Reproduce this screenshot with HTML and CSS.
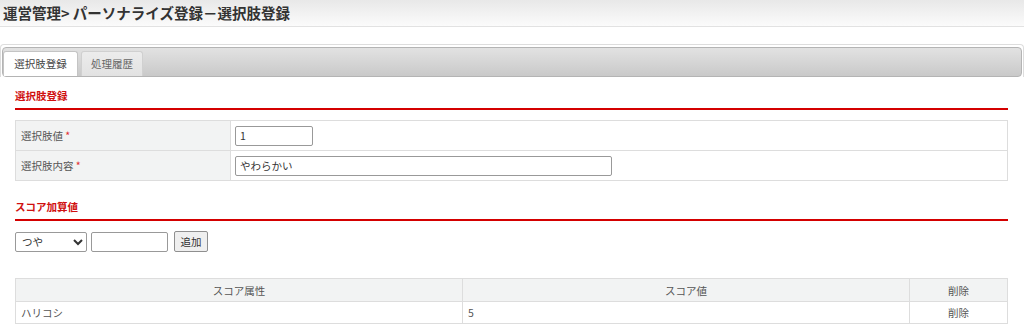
FILE: index.html
```html
<!DOCTYPE html>
<html lang="ja">
  <head>
    <meta charset="UTF-8" />
    <title>選択肢登録</title>
    <link rel="stylesheet" href="styles.css">
  </head>
  <body>
    <div class="page-title">運営管理&gt; パーソナライズ登録－選択肢登録</div>
    <div class="tabs">
      <div class="tab-nav">
        <span class="tab active">選択肢登録</span>
        <span class="tab">処理履歴</span>
      </div>
    </div>
    <div class="panel">
      <h2 class="section-title">選択肢登録</h2>
      <table class="form-table">
        <tr>
          <th>選択肢値 <span class="req">*</span></th>
          <td><input type="text" class="input-short" value="1" /></td>
        </tr>
        <tr>
          <th>選択肢内容 <span class="req">*</span></th>
          <td><input type="text" class="input-long" value="やわらかい" /></td>
        </tr>
      </table>

      <h2 class="section-title second">スコア加算値</h2>
      <div class="add-row">
        <select class="attr-select">
          <option>つや</option>
          <option>ハリコシ</option>
        </select>
        <input type="text" class="score-input" />
        <button class="add-btn">追加</button>
      </div>

      <table class="list-table">
        <tr>
          <th class="col-attr">スコア属性</th>
          <th class="col-score">スコア値</th>
          <th class="col-del">削除</th>
        </tr>
        <tr>
          <td>ハリコシ</td>
          <td>5</td>
          <td class="center">削除</td>
        </tr>
      </table>
    </div>
  </body>
</html>
```

FILE: styles.css
```css
* {
  padding: 0;
  margin: 0;
  box-sizing: border-box;
}
body {
  font-family: 'Noto Sans CJK JP', 'Noto Sans', sans-serif;
  font-size: 10.5px;
  color: #444;
  background: #fff;
}
.page-title {
  height: 27px;
  line-height: 26px;
  padding-left: 3px;
  font-size: 14.5px;
  font-weight: bold;
  color: #333;
  background: linear-gradient(#e8e8e8, #fbfbfb);
  border-bottom: 1px solid #e2e2e2;
}
.tabs {
  margin-top: 17px;
  border: 1px solid #ddd;
  border-bottom: none;
  border-radius: 4px 4px 0 0;
  padding: 2px 1px 0 1px;
}
.tab-nav {
  height: 30px;
  display: flex;
  align-items: flex-end;
  gap: 3px;
  border: 1px solid #b4b4b4;
  border-radius: 4px;
  background: linear-gradient(#e2e2e2, #c9c9c9);
}
.tab {
  width: 62px;
  height: 25px;
  line-height: 24px;
  text-align: center;
  color: #666;
  font-size: 10.5px;
  border: 1px solid #d0d0d0;
  border-bottom: none;
  border-radius: 3px 3px 0 0;
  background: linear-gradient(#ececec, #e2e2e2);
}
.tab.active {
  width: 75px;
  background: #fff;
  color: #444;
  border-color: #c4c4c4;
}
.panel {
  padding: 11px 16px 0 15px;
}
.section-title {
  font-size: 10.5px;
  font-weight: bold;
  line-height: 16px;
  color: #d01010;
  padding-bottom: 4px;
  border-bottom: 2px solid #d40000;
}
.section-title.second {
  margin-top: 18px;
}
table {
  width: 100%;
  border-collapse: collapse;
}
.form-table {
  margin-top: 10px;
}
.form-table th,
.form-table td {
  border: 1px solid #ddd;
  height: 30px;
  text-align: left;
  font-weight: normal;
}
.form-table th {
  width: 215px;
  padding-left: 5px;
  background: #f2f3f3;
  color: #555;
}
.form-table td {
  padding-left: 4px;
}
.req {
  color: #e03030;
}
input[type='text'],
select {
  height: 20px;
  border: 1px solid #999;
  border-radius: 2px;
  font-family: inherit;
  font-size: 10.5px;
  color: #333;
  padding: 0 4px;
  vertical-align: middle;
}
.input-short {
  width: 78px;
}
.input-long {
  width: 377px;
}
.add-row {
  margin-top: 10px;
  display: flex;
  align-items: center;
  height: 21px;
}
.attr-select {
  width: 72px;
  background: #fff;
  padding: 0 2px;
}
.score-input {
  width: 77px;
  margin-left: 4px;
}
.add-btn {
  width: 34px;
  height: 21px;
  margin-left: 6px;
  border: 1px solid #8f8f8f;
  border-radius: 2px;
  background: #efefef;
  font-family: inherit;
  font-size: 10.5px;
  color: #333;
}
.list-table {
  margin-top: 26px;
}
.list-table th,
.list-table td {
  border: 1px solid #ddd;
  height: 22px;
  font-weight: normal;
  color: #555;
}
.list-table th {
  height: 23px;
  background: #f2f3f3;
}
.list-table td {
  padding-left: 5px;
}
.list-table .center {
  text-align: center;
  padding-left: 0;
}
.col-attr {
  width: 447px;
}
.col-score {
  width: 447px;
}
```
